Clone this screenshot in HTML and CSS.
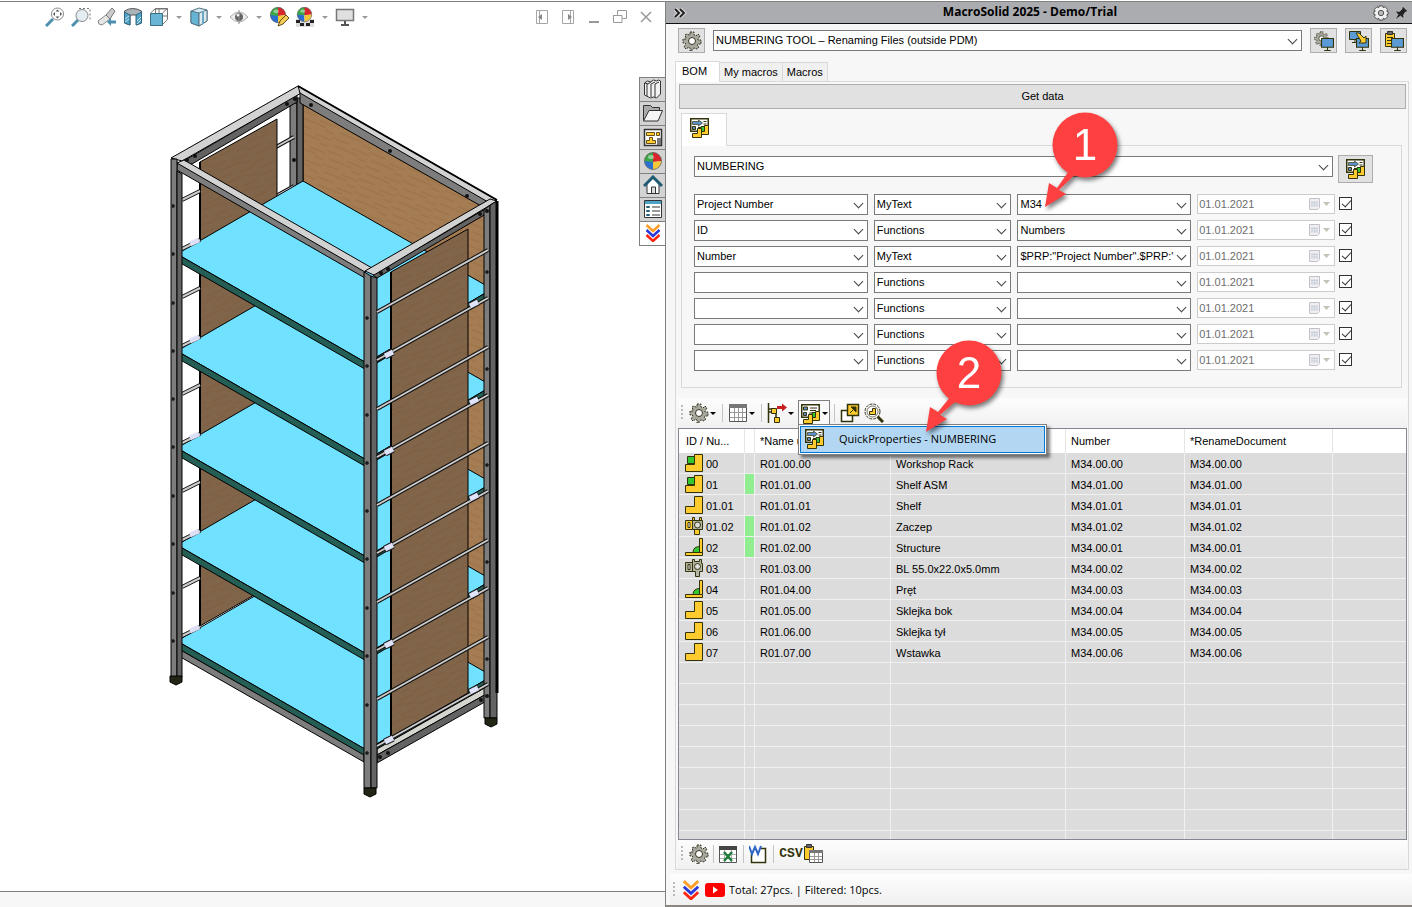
FILE: index.html
```html
<!DOCTYPE html>
<html lang="en">
<head>
    <meta charset="UTF-8">
    <title>MacroSolid 2025 - Demo/Trial</title>
    <link rel="stylesheet" href="styles.css">
</head>
<body>
<svg class="defs" aria-hidden="true">
    <symbol id="i-gear" viewBox="0 0 20 20">
        <path d="M8 1h4v3l2 1 2-2 2 2-2 3v1h3v4h-3l-1 1 2 2-2 2-3-1-2 1v2H8v-3l-1-1-3 2-2-2 2-3-1-1H1V8h3V7L3 4l2-1 2 1 1 0z" fill="#a9a9a2" stroke="#33331c" stroke-dasharray="2 1"/>
        <circle cx="10" cy="10" r="3.500" fill="#fff" stroke="#33331c"/>
    </symbol>
    <symbol id="i-quick" viewBox="0 0 20 20">
        <path d="M.750.750h17.500v7L12 13.250H.750z" fill="#fff" stroke="#33330a" stroke-width="1.500"/>
        <path d="M2.500 3.500h6V2l4 3-4 3V6.500h-6z" fill="#5b8fc9" stroke="#33330a" stroke-width=".7"/>
        <path d="M2.500 8.500h3v3h-3z" fill="#5b8fc9" stroke="#33330a"/>
        <path d="M13.500 3.500h3M13.500 6h3M8 9.500h3" stroke="#33330a"/>
        <path d="M11 8.500h4v5h-4z" fill="#32c832" stroke="#33330a"/>
        <path d="M10.500 16.500v-3h4v-6h4v9z" fill="#ffcb2f" stroke="#33330a"/>
        <path d="M2.500 19.500v-4h5v-5h4v9z" fill="#ffcb2f" stroke="#33330a"/>
    </symbol>
    <symbol id="i-props" viewBox="0 0 20 20">
        <path d="M.750.750h17.500v7L12 13.250H.750z" fill="#fff" stroke="#33330a" stroke-width="1.500"/>
        <path d="M2.500 3h4v3h-4zM2.500 8.500h3v3h-3z" fill="#5b8fc9" stroke="#33330a"/>
        <path d="M9 4h7M9 6.500h6M8 9h3" stroke="#33330a"/>
        <path d="M11 8.500h4v5h-4z" fill="#32c832" stroke="#33330a"/>
        <path d="M10.500 16.500v-3h4v-6h4v9z" fill="#ffcb2f" stroke="#33330a"/>
        <path d="M2.500 19.500v-4h5v-5h4v9z" fill="#ffcb2f" stroke="#33330a"/>
    </symbol>
    <symbol id="i-part" viewBox="0 0 18 18">
        <path d="M.5 17.500v-7h9v-10h8v17z" fill="#ffcb2f" stroke="#33330a"/>
    </symbol>
    <symbol id="i-asm" viewBox="0 0 18 18">
        <path d="M.5 17.500v-7h9v-10h8v17z" fill="#ffcb2f" stroke="#33330a"/>
        <path d="M2.500 2.500h7v7h-7z" fill="#32c832" stroke="#33330a"/>
    </symbol>
    <symbol id="i-weld" viewBox="0 0 18 18">
        <path d="M8 14.500q0-6 7-6v6z" fill="#32c832" stroke="#33330a"/>
        <path d="M.5 14.500h17v3H.5zM14.500 14.500V.5h3v14z" fill="#ffcb2f" stroke="#33330a"/>
    </symbol>
    <symbol id="i-bolt" viewBox="0 0 18 18">
        <path d="M.5 3.500h7v9h-7z" fill="#b5b5a5" stroke="#33330a"/>
        <path d="M7.500.5h2v2h5v-2h2v4h1v8h-3v5h-4v-5h-3z" fill="#b5b5a5" stroke="#33330a"/>
        <path d="M3 5.500h2v5H3z" fill="#eee" stroke="#33330a"/>
        <circle cx="12.500" cy="7.500" r="3" fill="#ddd" stroke="#33330a"/>
    </symbol>
    <symbol id="i-bolt-y" viewBox="0 0 18 18">
        <path d="M.5 3.500h7v9h-7zM9.500 12.500h5v5h-5zM7.500.5h2v3h-2zM14.500.5h2v3h-2z" fill="#ffcb2f" stroke="#33330a"/>
        <path d="M7.500 3.500h10v9h-10z" fill="#b5b5a5" stroke="#33330a"/>
        <path d="M3 5.500h2v5H3z" fill="#fff" stroke="#33330a"/>
        <circle cx="12.500" cy="8" r="3" fill="#ddd" stroke="#33330a"/>
    </symbol>
    <symbol id="i-screen" viewBox="0 0 12 12">
        <path d="M.5.5h11v8H.5zM6 8v3M3 11.500h6" fill="#5b9bd5" stroke="#33330a"/>
    </symbol>
    <symbol id="i-chevrons" viewBox="0 0 16 18">
        <g fill="none" stroke-width="2.500">
            <path d="M1.500 1 8 7l6.500-6" stroke="#ff9f27"/>
            <path d="M1.500 6 8 12l6.500-6" stroke="#2a36d8"/>
            <path d="M1.500 11 8 17l6.500-6" stroke="#ff2410"/>
        </g>
    </symbol>
    <symbol id="i-cal" viewBox="0 0 22 12">
        <path d="M.5.5h10v9l-2 2h-8z" fill="#f1eef2" stroke="#c4c0c8"/>
        <path d="M3 3v6M5.500 3v6M8 3v6M2 4.500h7M2 7h7" stroke="#c9d0dc"/>
        <path d="M14 4h7l-3.500 4z" fill="#c2c4b8"/>
    </symbol>
    <symbol id="i-ball" viewBox="0 0 20 20">
        <clipPath id="ball-clip"><circle cx="10" cy="10" r="8.500"/></clipPath>
        <g clip-path="url(#ball-clip)">
            <path d="M0 0h11v11H0z" fill="#39a845"/>
            <path d="M10 0h10v10l-10 1z" fill="#d9262c"/>
            <path d="M0 10l10 1v9H0z" fill="#2b6fd0"/>
            <path d="M10 11l10-1v10H10z" fill="#f5c838"/>
        </g>
        <ellipse cx="8" cy="6" rx="3" ry="2" fill="#fff" opacity=".45"/>
        <circle cx="10" cy="10" r="8.500" fill="none" stroke="#555" stroke-width=".7"/>
    </symbol>
</svg>

<div class="app">
    <main class="viewer">
        <div class="view-bar">
            <button title="Zoom to Fit"><svg viewBox="0 0 20 20"><path d="M1 19l7-7" stroke="#4d8fae" stroke-width="3"/><circle cx="12.500" cy="7" r="6" fill="#fff" stroke="#8a8a8a"/><path d="M12.500 2.500l2 2h-4zM12.500 11.500l2-2h-4zM8 7l2-2v4zM17 7l-2-2v4z" fill="#555"/></svg></button>
            <button title="Zoom to Area"><svg viewBox="0 0 20 20"><path d="M8 1.500h11v12" fill="none" stroke="#777" stroke-dasharray="2 2"/><path d="M1 19l6-6" stroke="#4d8fae" stroke-width="3"/><circle cx="11" cy="8.500" r="6" fill="#e4edf1" stroke="#8a8a8a"/></svg></button>
            <button title="Previous View"><svg viewBox="0 0 20 20"><path d="M1 14l8-6 4 4-8 6q-4 0-4-4z" fill="#e6e6e6" stroke="#888"/><path d="M9 8l6-7 3 3-5 8z" fill="#ccc" stroke="#777"/><path d="M19 15h-6" stroke="#4d8fae" stroke-width="3"/><path d="M14 11l-4 4 4 4z" fill="#4d8fae"/></svg></button>
            <button title="Section View"><svg viewBox="0 0 20 20"><path d="M1.500 4q8-5 17 0v12l-5 2V8H7v10l-5.500-2z" fill="#a9b3b8" stroke="#555"/><path d="M1.500 5L7 8v10l-5.500-2zM13 8l5.500-3v11L13 18z" fill="#4fa3c7" stroke="#34677f"/><path d="M2 12l4-3M2 15l4-3M14 14l4-4M14 17l4-4" stroke="#fff" stroke-width=".7"/></svg></button>
            <button title="View Orientation"><svg viewBox="0 0 20 20"><path d="M1.500 6l5-4.500h12v11l-5 5M6.500 2v4M13.500 6l5-4.500M6 2h12M10 2v4M14 9h4" fill="#fff" stroke="#777"/><path d="M1.500 6.500h12v12h-12z" fill="#68b5d5" stroke="#3e6d82"/></svg></button>
            <span class="caret"></span>
            <button title="Display Style"><svg viewBox="0 0 20 20"><path d="M2 4l8-3 8 2v11l-8 5-8-3z" fill="#d5e9f1" stroke="#547381"/><path d="M2 4l8 2v13l-8-3z" fill="#65b4d4" stroke="#547381"/><path d="M10 6l8-3v11l-8 5z" fill="#dce9ee" stroke="#547381"/><path d="M14 4v13" stroke="#6ba9c2" stroke-width="2"/></svg></button>
            <span class="caret"></span>
            <button title="Hide/Show Items"><svg viewBox="0 0 20 20"><path d="M1 10q9-10 18 0-9 10-18 0z" fill="#eee" stroke="#aaa"/><circle cx="10" cy="10" r="4" fill="#666"/><path d="M10 3v14" stroke="#888"/><circle cx="9" cy="8" r="1.500" fill="#eee"/></svg></button>
            <span class="caret"></span>
            <button title="Edit Appearance"><svg viewBox="0 0 20 20"><use href="#i-ball" x="0" y="-1" width="18" height="18"/><path d="M9 19l2-5 6-6 3 3-6 6z" fill="#f3cd57" stroke="#624b20"/></svg></button>
            <button title="Apply Scene"><svg viewBox="0 0 20 20"><path d="M1 12h18v8H1z" fill="#ddd"/><path d="M1 13h4v3H1zM5 16h4v3H5zM15 13h4v3h-4zM11 16h4v3h-4z" fill="#222"/><use href="#i-ball" x="1" y="-1" width="17" height="17"/></svg></button>
            <span class="caret"></span>
            <button title="View Settings"><svg viewBox="0 0 20 20"><path d="M1.500 2.500h17v11h-17z" fill="#e0e0e0" stroke="#777" stroke-width="1.500"/><path d="M10 14v4M6 18h8" stroke="#555" stroke-width="2"/></svg></button>
            <span class="caret"></span>
            <div class="window-buttons">
                <button title="Collapse left"><svg viewBox="0 0 14 14"><path d="M1.500.5h11v13h-11zM4.500 1v12" fill="none" stroke="#a5a5a5"/><path d="M7 4v6L3 7z" fill="#888"/></svg></button>
                <button title="Collapse right"><svg viewBox="0 0 14 14"><path d="M1.500.5h11v13h-11zM9.500 1v12" fill="none" stroke="#a5a5a5"/><path d="M7 4v6l4-3z" fill="#888"/></svg></button>
                <button title="Minimize"><svg viewBox="0 0 14 14"><path d="M2 12h10" stroke="#999" stroke-width="2"/></svg></button>
                <button title="Restore"><svg viewBox="0 0 14 14"><path d="M4.500 5V.5h9v8h-4M0 5.500h9v7H.5v-7" fill="none" stroke="#999"/></svg></button>
                <button title="Close"><svg viewBox="0 0 14 14"><path d="M2 2l10 10M12 2L2 12" stroke="#999" stroke-width="1.500"/></svg></button>
            </div>
        </div>

        <div class="scene">
            <svg class="rack" viewBox="158 80 350 725" role="img" aria-label="Workshop Rack">
                <defs>
                    <pattern id="wood" width="40" height="14" patternUnits="userSpaceOnUse" patternTransform="rotate(22)">
                        <path d="M0 0h40v14H0z" fill="#a57d54"/>
                        <path d="M0 3h17M22 6h18M4 10h26M30 13h10" stroke="#93683d" stroke-width=".6"/>
                    </pattern>
                    <pattern id="wood-dark" width="40" height="14" patternUnits="userSpaceOnUse" patternTransform="rotate(-25)">
                        <path d="M0 0h40v14H0z" fill="#81654a"/>
                        <path d="M0 3h17M22 6h18M4 10h26M30 13h10" stroke="#775636" stroke-width=".6"/>
                    </pattern>
                    <g id="shelf">
                        <path d="M177 254l126-73 184 105v6l-117 69v4z" fill="#70e1ff" stroke="#000"/>
                        <path d="M177 254l193 111v7L177 261z" fill="#245e54" stroke="#000"/>
                        <path d="M370 361l117-69v6l-117 69z" fill="#245e54" stroke="#000"/>
                    </g>
                    <g id="rod">
                        <path d="M377 312l111-62" stroke="#111" stroke-width="4"/>
                        <path d="M377 312l111-62" stroke="#ccc" stroke-width="2"/>
                    </g>
                    <g id="rod-clip">
                        <use href="#rod" y="48"/>
                        <path d="M385 356l8-4M470 306l8-4" stroke="#222" stroke-width="7"/>
                        <path d="M385 356l8-4M470 306l8-4" stroke="#e0e4fa" stroke-width="5"/>
                    </g>
                    <g id="rod-left">
                        <path d="M182 200l18-9M182 249l18-9" stroke="#111" stroke-width="4"/>
                        <path d="M182 200l18-9M182 249l18-9" stroke="#ccc" stroke-width="2"/>
                        <path d="M190 244l9-4" stroke="#dde0f4" stroke-width="5"/>
                    </g>
                    <g id="bolts" fill="#111" stroke="#333">
                        <circle cx="173" cy="206" r="1.500"/><circle cx="173" cy="254" r="1.500"/>
                        <circle cx="367" cy="318" r="1.500"/><circle cx="367" cy="366" r="1.500"/>
                        <circle cx="487" cy="272" r="1.500"/>
                    </g>
                    <g id="foot">
                        <path d="M-6-1h12v6L0 8l-6-3z" fill="#222615" stroke="#000"/>
                    </g>
                </defs>
                <path d="M303 102l184 105v484l-184-105z" fill="url(#wood)" stroke="#000"/>
                <path d="M290 103h7v90h-7z" fill="#7d7d7d" stroke="#000"/>
                <path d="M297 98h6v90h-6z" fill="#636363" stroke="#000"/>
                <path d="M276 147l18-10M276 196l18-10" stroke="#111" stroke-width="4"/>
                <path d="M276 147l18-10M276 196l18-10" stroke="#ccc" stroke-width="2"/>
                <path d="M200 162l77-43v463l-77 44z" fill="url(#wood-dark)" stroke="#000"/>
                <path d="M200 162v464" stroke="#000" stroke-width="2"/>
                <use href="#shelf" y="387"/>
                <use href="#shelf" y="291"/>
                <use href="#shelf" y="194"/>
                <use href="#shelf" y="97"/>
                <use href="#shelf"/>
                <use href="#rod-left"/>
                <use href="#rod-left" y="97"/>
                <use href="#rod-left" y="194"/>
                <use href="#rod-left" y="291"/>
                <use href="#rod-left" y="387"/>
                <!-- bottom frame -->
                <path d="M177 648l187 107v7L177 655z" fill="#7d7d7d" stroke="#000"/>
                <path d="M377 749l111-63 2 6-113 63z" fill="#d5d5d0" stroke="#000"/>
                <path d="M377 755l113-63v7l-113 64z" fill="#636363" stroke="#000"/>
                <!-- right side panel -->
                <path d="M391 272l77-43v464l-77 44z" fill="url(#wood-dark)" stroke="#000"/>
                <path d="M391 272v465" stroke="#000" stroke-width="2"/>
                <!-- top frame -->
                <path d="M182 162l115-67v7l-105 62z" fill="#636363" stroke="#000"/>
                <path d="M171 158l127-72 5 6-121 69z" fill="#d2d2d2" stroke="#000"/>
                <path d="M300 92l187 108-6 6-181-103z" fill="#7d7d7d" stroke="#000"/>
                <path d="M298 86l199 114-9 2-188-109z" fill="#d2d2d2" stroke="#000"/>
                <path d="M298 86l199 114" stroke="#000" stroke-width="2"/>
                <path d="M177 162l188 109v7L177 170z" fill="#7d7d7d" stroke="#000"/>
                <path d="M177 163l7-3 188 108-7 4z" fill="#d2d2d2" stroke="#000"/>
                <path d="M373 275l124-73-6 9-114 67z" fill="#636363" stroke="#000"/>
                <path d="M365 271l125-72 7 2-123 74z" fill="#d2d2d2" stroke="#000"/>
                <!-- posts -->
                <path d="M171 159h6v518h-6z" fill="#7d7d7d" stroke="#000"/>
                <path d="M177 171l5 3v503h-5z" fill="#636363" stroke="#000"/>
                <path d="M484 210l6-5v513h-6z" fill="#7d7d7d" stroke="#000"/>
                <path d="M490 205l7-4v517h-7z" fill="#636363" stroke="#000"/>
                <path d="M497 201v492" stroke="#000" stroke-width="3"/>
                <path d="M364 272l7 4v512h-7z" fill="#7d7d7d" stroke="#000"/>
                <path d="M371 276l6 2v510h-6z" fill="#636363" stroke="#000"/>
                <use href="#rod"/>
                <use href="#rod" y="97"/>
                <use href="#rod" y="193"/>
                <use href="#rod" y="290"/>
                <use href="#rod" y="387"/>
                <use href="#rod-clip"/>
                <use href="#rod-clip" y="97"/>
                <use href="#rod-clip" y="193"/>
                <use href="#rod-clip" y="290"/>
                <use href="#rod-clip" y="386"/>
                <use href="#bolts"/>
                <use href="#bolts" y="97"/>
                <use href="#bolts" y="193"/>
                <use href="#bolts" y="290"/>
                <use href="#bolts" y="387"/>
                <g fill="#111">
                    <circle cx="187" cy="160" r="2"/><circle cx="195" cy="156" r="2"/>
                    <circle cx="287" cy="104" r="2"/><circle cx="295" cy="99" r="2"/>
                    <circle cx="311" cy="105" r="2"/><circle cx="390" cy="151" r="2"/><circle cx="467" cy="196" r="2"/>
                    <circle cx="294" cy="160" r="2"/>
                    <circle cx="480" cy="214" r="2"/><circle cx="487" cy="211" r="2"/>
                    <circle cx="381" cy="273" r="2"/><circle cx="388" cy="269" r="2"/>
                    <circle cx="380" cy="757" r="2"/><circle cx="388" cy="753" r="2"/>
                    <circle cx="481" cy="700" r="2"/><circle cx="487" cy="696" r="2"/>
                </g>
                <use href="#foot" x="176" y="677"/>
                <use href="#foot" x="370" y="789"/>
                <use href="#foot" x="491" y="719"/>
            </svg>
        </div>

        <nav class="side-tabs">
            <button title="Design Library"><svg viewBox="0 0 20 20"><path d="M1.500 4l3-2 3 1 3-2 3 1 2-1 2 1v13l-4 4-3-1-3 1-6-3zM4 5v12M8 5v13M12 5v13M2 4l3 1 3-2M8 5l4-2M12 5l4-2" fill="#f2f2f2" stroke="#333"/></svg></button>
            <button title="File Explorer"><svg viewBox="0 0 20 20"><path d="M.5 18V2.500h7l2 2h7V8" fill="#aaa" stroke="#333"/><path d="M.5 18L6 7.500h13.500L15 18z" fill="#f5f5f5" stroke="#333"/></svg></button>
            <button title="View Palette"><svg viewBox="0 0 20 20"><path d="M1.500 2.500h17v16h-17z" fill="#fff" stroke="#333" stroke-width="1.500"/><path d="M3.500 5.500h8v3h-8zM13.500 5.500h3v3h-3zM6.500 10.500h3v3h3v3h-9v-3h3z" fill="#ffcb2f" stroke="#665018"/><path d="M14 11h4v7h-4z" fill="#777"/></svg></button>
            <button title="Appearances"><svg><use href="#i-ball"/></svg></button>
            <button title="Home"><svg viewBox="0 0 20 20"><path d="M4 9v9.500h12V9l-6-6z" fill="#fff" stroke="#333"/><path d="M1 11l9-9 9 9" fill="none" stroke="#215a73" stroke-width="3"/><path d="M8.500 18v-6h4v6" fill="#ddd" stroke="#333"/></svg></button>
            <button title="Custom Properties"><svg viewBox="0 0 20 20"><path d="M1.500 1.500h17v17h-17z" fill="#fff" stroke="#333"/><path d="M2 2h16v3H2z" fill="#4ca3c5"/><path d="M3.500 7.500h3v1h-3zM3.500 11.500h3v1h-3zM3.500 15.500h3v1h-3z" stroke="#24627c"/><path d="M9 8h8M9 12h8M9 16h8" stroke="#333"/></svg></button>
            <button class="current" title="MacroSolid"><svg><use href="#i-chevrons"/></svg></button>
        </nav>
        <div class="viewer-status"></div>
    </main>

    <aside class="pane">
        <header class="pane-title">
            <button title="Collapse"><svg viewBox="0 0 14 14"><path d="M2 3l4 4-4 4M7 3l4 4-4 4" fill="none" stroke="#ddd" stroke-width="4"/><path d="M2 3l4 4-4 4M7 3l4 4-4 4" fill="none" stroke="#222" stroke-width="2"/></svg></button>
            <h1>MacroSolid 2025 - Demo/Trial</h1>
            <button class="wide" title="Options"><svg viewBox="0 0 18 18"><path d="M7 1h4l.5 2 2-1 3 3-1 2 1.500.5v3l-1.500.5 1 2-3 3-2-1-.5 2H7l-.5-2-2 1-3-3 1-2L1 10.500v-3L2.500 7l-1-2 3-3 2 1z" fill="#eee" stroke="#444"/><circle cx="9" cy="9" r="3" fill="#bbb" stroke="#444"/></svg></button>
            <button title="Pin"><svg viewBox="0 0 14 14"><path d="M8.500 0L14 5.500l-2.500.5-2 3 .5 4-3.500-3L1 14l3-5.500L1 5l4.500.5L8 3z" fill="#222" stroke="#ddd" stroke-width=".5"/></svg></button>
        </header>

        <div class="macro-row">
            <button class="tool" title="Settings"><svg><use href="#i-gear"/></svg></button>
            <span class="pick"><select aria-label="Macro"><option>NUMBERING TOOL – Renaming Files (outside PDM)</option></select></span>
            <button class="tool" title="Configure"><svg viewBox="0 0 20 20"><use href="#i-gear" width="15" height="15"/><use href="#i-screen" x="7" y="7" width="13" height="13"/></svg></button>
            <button class="tool" title="Transfer"><svg viewBox="0 0 20 20"><use href="#i-screen" x="0" y="0" width="12" height="12"/><use href="#i-screen" x="7" y="7" width="13" height="13"/><path d="M7 2h3l5 5 2-2v7h-7l2-2z" fill="#ffcb2f" stroke="#33330a"/></svg></button>
            <button class="tool" title="Paste"><svg viewBox="0 0 20 20"><path d="M1.500 2.500h9v13h-9z" fill="#ffcb2f" stroke="#33330a"/><path d="M3.500.5h5v3h-5z" fill="#666" stroke="#333"/><path d="M3 6.500h6M3 9.500h4M3 12.500h4" stroke="#33330a"/><use href="#i-screen" x="7" y="7" width="13" height="13"/></svg></button>
        </div>

        <div class="tabs">
            <button class="current">BOM</button>
            <button>My macros</button>
            <button>Macros</button>
        </div>

        <section class="tab-page">
            <button class="get-data">Get data</button>

            <div class="sub-tabs"><button title="QuickProperties"><svg><use href="#i-quick"/></svg></button></div>
            <div class="sub-page">
                <div class="profile-row">
                    <span class="pick"><select aria-label="Profile"><option>NUMBERING</option></select></span>
                    <button class="tool large" title="Run"><svg><use href="#i-quick"/></svg></button>
                </div>
                <div class="props">
                    <span class="pick"><select aria-label="Property 1"><option>Project Number</option></select></span>
                    <span class="pick"><select aria-label="Type 1"><option>MyText</option></select></span>
                    <span class="pick"><select aria-label="Value 1"><option>M34</option></select>
                        <svg class="callout callout-1" viewBox="0 0 90 110">
                            <path d="M36 53L15 83l-8-5L3 102l21-13-7-4 28-27z" fill="#ff4040"/>
                            <circle cx="43" cy="40" r="32.500" fill="#ff4040"/>
                            <text x="43" y="55">1</text>
                        </svg>
                    </span>
                    <span class="date"><input aria-label="Date 1" value="01.01.2021" disabled><svg><use href="#i-cal"/></svg></span>
                    <input type="checkbox" aria-label="Use 1" checked>

                    <span class="pick"><select aria-label="Property 2"><option>ID</option></select></span>
                    <span class="pick"><select aria-label="Type 2"><option>Functions</option></select></span>
                    <span class="pick"><select aria-label="Value 2"><option>Numbers</option></select></span>
                    <span class="date"><input aria-label="Date 2" value="01.01.2021" disabled><svg><use href="#i-cal"/></svg></span>
                    <input type="checkbox" aria-label="Use 2" checked>

                    <span class="pick"><select aria-label="Property 3"><option>Number</option></select></span>
                    <span class="pick"><select aria-label="Type 3"><option>MyText</option></select></span>
                    <span class="pick"><select aria-label="Value 3"><option>$PRP:"Project Number".$PRP:'</option></select></span>
                    <span class="date"><input aria-label="Date 3" value="01.01.2021" disabled><svg><use href="#i-cal"/></svg></span>
                    <input type="checkbox" aria-label="Use 3" checked>

                    <span class="pick"><select aria-label="Property 4"><option></option></select></span>
                    <span class="pick"><select aria-label="Type 4"><option>Functions</option></select></span>
                    <span class="pick"><select aria-label="Value 4"><option></option></select></span>
                    <span class="date"><input aria-label="Date 4" value="01.01.2021" disabled><svg><use href="#i-cal"/></svg></span>
                    <input type="checkbox" aria-label="Use 4" checked>

                    <span class="pick"><select aria-label="Property 5"><option></option></select></span>
                    <span class="pick"><select aria-label="Type 5"><option>Functions</option></select></span>
                    <span class="pick"><select aria-label="Value 5"><option></option></select></span>
                    <span class="date"><input aria-label="Date 5" value="01.01.2021" disabled><svg><use href="#i-cal"/></svg></span>
                    <input type="checkbox" aria-label="Use 5" checked>

                    <span class="pick"><select aria-label="Property 6"><option></option></select></span>
                    <span class="pick"><select aria-label="Type 6"><option>Functions</option></select></span>
                    <span class="pick"><select aria-label="Value 6"><option></option></select></span>
                    <span class="date"><input aria-label="Date 6" value="01.01.2021" disabled><svg><use href="#i-cal"/></svg></span>
                    <input type="checkbox" aria-label="Use 6" checked>

                    <span class="pick"><select aria-label="Property 7"><option></option></select></span>
                    <span class="pick"><select aria-label="Type 7"><option>Functions</option></select></span>
                    <span class="pick"><select aria-label="Value 7"><option></option></select></span>
                    <span class="date"><input aria-label="Date 7" value="01.01.2021" disabled><svg><use href="#i-cal"/></svg></span>
                    <input type="checkbox" aria-label="Use 7" checked>
                </div>
            </div>

            <div class="strip bom-strip">
                <span class="grip"></span>
                <button class="drop" title="Options"><svg><use href="#i-gear"/></svg></button>
                <span class="sep"></span>
                <button class="drop" title="Columns"><svg viewBox="0 0 20 20"><path d="M1.500 1.500h17v17h-17z" fill="#fff" stroke="#555"/><path d="M1 1h18v4H1z" fill="#777"/><path d="M2 9.500h16M2 14.500h16M6.500 5v13M10.500 5v13M14.500 5v13" stroke="#999"/></svg></button>
                <span class="sep"></span>
                <button class="drop" title="Structure"><svg viewBox="0 0 20 20"><path d="M1.500 0v20M1 6h4M1 9h4M9 10v5" stroke="#33330a" stroke-width="1.500"/><path d="M4.500 5.500h5v5h-5zM7.500 14.500h5v5h-5z" fill="#ffcb2f" stroke="#33330a"/><path d="M10 3h5V.500L20 4.500l-5 4V6h-5z" fill="#c42020"/></svg></button>
                <div class="menu-host">
                    <button class="drop open" title="QuickProperties"><svg><use href="#i-props"/></svg></button>
                    <div class="menu"><button><svg><use href="#i-quick"/></svg>QuickProperties - NUMBERING</button></div>
                    <svg class="callout callout-2" viewBox="0 0 90 110">
                        <path d="M36 53L15 79l-8-5L3 99l21-13-7-4 28-24z" fill="#ff4040"/>
                        <circle cx="46" cy="40" r="32.500" fill="#ff4040"/>
                        <text x="46" y="55">2</text>
                    </svg>
                </div>
                <span class="sep"></span>
                <button class="spaced" title="Open"><svg viewBox="0 0 20 20"><path d="M1.500 7.500h11v11h-11z" fill="#fff" stroke="#33330a" stroke-width="1.500"/><path d="M7.500 1.500h11v11h-11z" fill="#ffcb2f" stroke="#33330a" stroke-width="1.500"/><path d="M10 10l5-5M11 4h5v5z" fill="#33330a" stroke="#33330a"/></svg></button>
                <button title="Find"><svg viewBox="0 0 20 20"><path d="M13 13l6 6" stroke="#33330a" stroke-width="3"/><circle cx="8.500" cy="8.500" r="7.500" fill="#fff" stroke="#33331c" stroke-dasharray="3 1"/><circle cx="8.500" cy="8.500" r="5.500" fill="#fff" stroke="#33331c" stroke-width=".7"/><path d="M5.500 11.500v-3h3v-3h3v6z" fill="#ffcb2f" stroke="#33330a"/></svg></button>
            </div>

            <div class="list">
                <table>
                    <colgroup><col class="c-id"><col class="c-mark"><col class="c-name"><col class="c-desc"><col class="c-num"><col class="c-ren"><col></colgroup>
                    <thead>
                        <tr><th>ID / Nu...</th><th></th><th>*Name u</th><th></th><th>Number</th><th>*RenameDocument</th><th></th></tr>
                    </thead>
                    <tbody>
                        <tr><td><svg><use href="#i-asm"/></svg>00</td><td></td><td>R01.00.00</td><td>Workshop Rack</td><td>M34.00.00</td><td>M34.00.00</td><td></td></tr>
                        <tr><td><svg><use href="#i-asm"/></svg>01</td><td class="mark"></td><td>R01.01.00</td><td>Shelf ASM</td><td>M34.01.00</td><td>M34.01.00</td><td></td></tr>
                        <tr><td><svg><use href="#i-part"/></svg>01.01</td><td></td><td>R01.01.01</td><td>Shelf</td><td>M34.01.01</td><td>M34.01.01</td><td></td></tr>
                        <tr><td><svg><use href="#i-bolt-y"/></svg>01.02</td><td class="mark"></td><td>R01.01.02</td><td>Zaczep</td><td>M34.01.02</td><td>M34.01.02</td><td></td></tr>
                        <tr><td><svg><use href="#i-weld"/></svg>02</td><td class="mark"></td><td>R01.02.00</td><td>Structure</td><td>M34.00.01</td><td>M34.00.01</td><td></td></tr>
                        <tr><td><svg><use href="#i-bolt"/></svg>03</td><td></td><td>R01.03.00</td><td>BL 55.0x22.0x5.0mm</td><td>M34.00.02</td><td>M34.00.02</td><td></td></tr>
                        <tr><td><svg><use href="#i-weld"/></svg>04</td><td></td><td>R01.04.00</td><td>Pręt</td><td>M34.00.03</td><td>M34.00.03</td><td></td></tr>
                        <tr><td><svg><use href="#i-part"/></svg>05</td><td></td><td>R01.05.00</td><td>Sklejka bok</td><td>M34.00.04</td><td>M34.00.04</td><td></td></tr>
                        <tr><td><svg><use href="#i-part"/></svg>06</td><td></td><td>R01.06.00</td><td>Sklejka tył</td><td>M34.00.05</td><td>M34.00.05</td><td></td></tr>
                        <tr><td><svg><use href="#i-part"/></svg>07</td><td></td><td>R01.07.00</td><td>Wstawka</td><td>M34.00.06</td><td>M34.00.06</td><td></td></tr>
                        <tr><td></td><td></td><td></td><td></td><td></td><td></td><td></td></tr>
                        <tr><td></td><td></td><td></td><td></td><td></td><td></td><td></td></tr>
                        <tr><td></td><td></td><td></td><td></td><td></td><td></td><td></td></tr>
                        <tr><td></td><td></td><td></td><td></td><td></td><td></td><td></td></tr>
                        <tr><td></td><td></td><td></td><td></td><td></td><td></td><td></td></tr>
                        <tr><td></td><td></td><td></td><td></td><td></td><td></td><td></td></tr>
                        <tr><td></td><td></td><td></td><td></td><td></td><td></td><td></td></tr>
                        <tr><td></td><td></td><td></td><td></td><td></td><td></td><td></td></tr>
                        <tr><td></td><td></td><td></td><td></td><td></td><td></td><td></td></tr>
                    </tbody>
                </table>
            </div>

            <div class="strip export-strip">
                <span class="grip"></span>
                <button title="Options"><svg><use href="#i-gear"/></svg></button>
                <span class="sep"></span>
                <button title="Excel"><svg viewBox="0 0 20 20"><path d="M.5 2.500h17v16H.5z" fill="#fff" stroke="#555"/><path d="M0 2h18v4H0z" fill="#444"/><path d="M1 10.500h16M1 14.500h16M5.500 6v12M12.500 6v12" stroke="#aaa"/><path d="M5 8l8 9M13 8l-8 9" stroke="#1d7a3c" stroke-width="2.500"/></svg></button>
                <span class="sep"></span>
                <button title="Word"><svg viewBox="0 0 20 20"><path d="M2.500 10v8.500h14v-14H12" fill="#fff" stroke="#33330a" stroke-width="1.500"/><path d="M0 2l3 8L6 3l3 7 3-8" fill="none" stroke="#2f66c4" stroke-width="2"/></svg></button>
                <span class="sep"></span>
                <button class="csv">CSV</button>
                <button title="Copy table"><svg viewBox="0 0 20 20"><path d="M1.500 2.500h9v13h-9z" fill="#ffcb2f" stroke="#33330a"/><path d="M3.500.5h5v3h-5z" fill="#666" stroke="#333"/><path d="M6.500 6.500h13v12h-13z" fill="#fff" stroke="#555"/><path d="M6 6h14v3H6z" fill="#777"/><path d="M7 12.500h12M7 15.500h12M11.500 9v9M15.500 9v9" stroke="#999"/></svg></button>
            </div>
        </section>

        <footer class="strip status">
            <span class="grip"></span>
            <button title="MacroSolid"><svg><use href="#i-chevrons"/></svg></button>
            <button title="YouTube"><svg viewBox="0 0 20 20"><rect y="3" width="20" height="14" rx="3" fill="#f00"/><path d="M8 6.500v7l5-3.500z" fill="#fff"/></svg></button>
            <span>Total: 27pcs. | Filtered: 10pcs.</span>
        </footer>
    </aside>
</div>
</body>
</html>
```
FILE: styles.css
```css
* {
    box-sizing: border-box;
}
body {
    margin: 0;
    font: 11px/14px "Liberation Sans", Arial, sans-serif;
    color: #000;
    background: #fff;
}
button, select, input {
    font: inherit;
    color: inherit;
    margin: 0;
}
button {
    padding: 0;
    border: 0;
    background: none;
}
svg {
    display: block;
    fill: none;
}
.defs {
    position: absolute;
    width: 0;
    height: 0;
}
.app {
    display: grid;
    grid-template-columns: 666fr 746fr;
    height: 100vh;
    padding-top: 1px;
}

/* model view */
.viewer {
    position: relative;
    display: flex;
    flex-direction: column;
    min-height: 0;
    border-top: 1px solid #808080;
    border-right: 1px solid #808080;
}
.view-bar {
    display: flex;
    align-items: center;
    gap: 6px;
    height: 30px;
    padding: 0 12px 0 45px;
}
.view-bar svg {
    width: 20px;
    height: 20px;
}
.caret {
    width: 6px;
    height: 3px;
    margin: 0 1px;
    border: 3px solid transparent;
    border-top: 3px solid #999;
    border-bottom: 0;
}
.window-buttons {
    display: flex;
    gap: 12px;
    margin-left: auto;
}
.window-buttons svg {
    width: 14px;
    height: 14px;
}
.scene {
    flex: 1;
    display: flex;
    justify-content: center;
    padding-top: 48px;
    min-height: 0;
}
.rack {
    width: 350px;
    height: 725px;
}
.side-tabs {
    position: absolute;
    right: 0;
    top: 75px;
    width: 26px;
    border: 1px solid #808080;
    border-right: 0;
}
.side-tabs button {
    display: flex;
    align-items: center;
    justify-content: center;
    width: 100%;
    height: 24px;
    padding-bottom: 2px;
    background: #d3d3d3;
    border-bottom: 1px solid #808080;
}
.side-tabs button.current {
    height: 23px;
    background: #fff;
    border: 0;
}
.side-tabs svg {
    width: 20px;
    height: 20px;
}
.side-tabs .current svg {
    height: 18px;
}
.viewer-status {
    height: 16px;
    background: #f7f7f7;
    border-top: 1px solid #808080;
}

/* task pane */
.pane {
    display: flex;
    flex-direction: column;
    min-width: 0;
    min-height: 0;
    background: #f7f7f7;
    border-top: 1px solid #808080;
    border-bottom: 2px solid #8a8682;
}
.pane-title {
    display: flex;
    align-items: center;
    gap: 5px;
    height: 22px;
    padding: 0 4px 0 7px;
    background: #abacb0;
    border-bottom: 1px solid #111;
}
.pane-title h1 {
    flex: 1;
    margin: 0;
    padding-bottom: 2px;
    text-align: center;
    font: bold 12px/16px "Open Sans", sans-serif;
}
.pane-title svg {
    width: 14px;
    height: 14px;
}
.pane-title .wide svg {
    width: 16px;
    height: 16px;
}
.macro-row {
    display: flex;
    align-items: center;
    gap: 8px;
    padding: 4px 5px 0 12px;
}
.macro-row .pick {
    flex: 1;
}
.tool {
    display: flex;
    align-items: center;
    justify-content: center;
    width: 27px;
    height: 25px;
    background: #e1e1e1;
    border: 1px solid #adadad;
}
.tool.large {
    width: 35px;
    height: 28px;
}
.tool svg {
    width: 20px;
    height: 20px;
}
.pick {
    position: relative;
    display: block;
    min-width: 0;
}
.pick::after {
    content: "";
    position: absolute;
    right: 6px;
    top: 6px;
    width: 6px;
    height: 6px;
    border: solid #444;
    border-width: 0 1px 1px 0;
    transform: rotate(45deg);
    pointer-events: none;
}
select {
    appearance: none;
    display: block;
    width: 100%;
    height: 21px;
    padding: 0 16px 2px 2px;
    border: 1px solid #7a7a7a;
    border-radius: 0;
    background: #fff;
}
.tabs {
    display: flex;
    align-items: flex-end;
    margin: 8px 0 0 9px;
}
.tabs button {
    height: 19px;
    padding: 0 4px;
    background: #f0f0f0;
    border: 1px solid #d9d9d9;
    border-left: 0;
    border-bottom: 0;
}
.tabs .current {
    position: relative;
    width: 45px;
    height: 21px;
    padding: 0 6px 2px;
    text-align: left;
    background: #fff;
    border-left: 1px solid #d9d9d9;
    margin-bottom: -1px;
}
.tab-page {
    flex: 1;
    display: flex;
    flex-direction: column;
    min-height: 0;
    margin: 0 3px 0 9px;
    padding: 2px 1px 0 2px;
    border: 1px solid #d9d9d9;
}
.get-data {
    height: 25px;
    flex: none;
    margin: 0 1px;
    padding-bottom: 2px;
    background: #e1e1e1;
    border: 1px solid #adadad;
}
.sub-tabs {
    margin: 4px 0 0 3px;
}
.sub-tabs button {
    position: relative;
    display: block;
    width: 46px;
    height: 33px;
    padding: 0 0 4px 8px;
    margin-bottom: -1px;
    background: #fff;
    border: 1px solid #d9d9d9;
    border-bottom: 0;
}
.sub-tabs svg {
    width: 20px;
    height: 20px;
}
.sub-page {
    margin: 0 5px 0 3px;
    padding: 9px 47px 16px 12px;
    border: 1px solid #d9d9d9;
}
.profile-row {
    display: flex;
    gap: 5px;
    margin-right: -19px;
}
.profile-row .pick {
    flex: 1;
    padding-top: 1px;
}
.profile-row .pick::after {
    top: 7px;
}
.props {
    display: grid;
    grid-template-columns: 174fr 138fr 174fr 138fr 13px;
    align-items: start;
    gap: 5px 6px;
    margin-top: 11px;
}
.date {
    position: relative;
    min-width: 0;
}
.date input {
    display: block;
    width: 100%;
    height: 20px;
    padding: 0 24px 0 1px;
    color: #6d6d6d;
    background: #fff;
    border: 1px solid #ccc;
}
.date svg {
    position: absolute;
    right: 4px;
    top: 4px;
    width: 22px;
    height: 12px;
}
input[type="checkbox"] {
    appearance: none;
    position: relative;
    width: 13px;
    height: 13px;
    margin: 3px 0 0 -2px;
    background: #fff;
    border: 1px solid #333;
}
input[type="checkbox"]:checked::after {
    content: "";
    position: absolute;
    left: 4px;
    top: 0;
    width: 4px;
    height: 8px;
    border: solid #333;
    border-width: 0 1px 1px 0;
    transform: rotate(42deg);
}

/* tool strips */
.strip {
    display: flex;
    align-items: center;
    height: 30px;
    flex: none;
    background: linear-gradient(#fdfdfd, #f0f0f0);
}
.strip svg {
    width: 20px;
    height: 20px;
}
.grip {
    width: 2px;
    height: 16px;
    margin: 0 6px 0 3px;
    background: repeating-linear-gradient(#bbb 0 2px, transparent 2px 4px);
}
.sep {
    width: 1px;
    height: 18px;
    margin: 0 5px 0 6px;
    background: #c4c4c4;
}
.bom-strip {
    margin-top: 10px;
}
.drop {
    display: flex;
    align-items: center;
    gap: 1px;
}
.drop::after {
    content: "";
    border: 3px solid transparent;
    border-top-color: #000;
    border-bottom: 0;
}
.menu-host {
    position: relative;
    z-index: 2;
    margin-left: 4px;
}
.menu-host + .sep {
    margin-left: 4px;
}
.spaced {
    margin-right: 4px;
}
.drop.open {
    width: 32px;
    height: 26px;
    padding-left: 2px;
    background: #fafafa;
    border: 1px solid #808080;
    border-bottom: 0;
}
.menu {
    position: absolute;
    left: 0;
    top: 24px;
    width: 249px;
    padding: 1px;
    background: #fff;
    border: 1px solid #808080;
    box-shadow: 3px 3px 3px rgba(0, 0, 0, .5);
}
.menu button {
    display: flex;
    align-items: center;
    gap: 14px;
    width: 100%;
    height: 27px;
    padding: 0 0 2px 4px;
    background: #b3d7f3;
    border: 1px solid #0078d7;
    font: 11px/16px "Open Sans", sans-serif;
}
.callout {
    position: absolute;
    z-index: 3;
    pointer-events: none;
    filter: drop-shadow(2px 3px 2px rgba(0, 0, 0, .5));
}
.strip .callout, .pick .callout {
    width: 90px;
    height: 110px;
}
.callout text {
    fill: #fff;
    text-anchor: middle;
    font: 44px "Liberation Sans", Arial, sans-serif;
}
.callout-1 {
    left: 25px;
    top: -89px;
}
.callout-2 {
    left: 125px;
    top: -67px;
}

/* bill of materials */
.list {
    flex: 1 1 0;
    min-height: 0;
    overflow: hidden;
    background: #dcdcdc;
    border: 1px solid #828790;
}
table {
    width: 100%;
    table-layout: fixed;
    border-collapse: separate;
    border-spacing: 0;
}
th, td {
    height: 21px;
    padding: 0 5px;
    text-align: left;
    font-weight: normal;
    white-space: nowrap;
    overflow: hidden;
    border-right: 1px solid #f0f0f0;
    border-bottom: 1px solid #f0f0f0;
}
th {
    height: 24px;
    background: #fff;
    border-right-color: #e5e5e5;
    border-bottom: 0;
}
th:first-child {
    padding-left: 7px;
}
td {
    padding-top: 1px;
}
td:first-child {
    padding: 1px 0 0 6px;
}
td svg {
    float: left;
    width: 18px;
    height: 18px;
    margin: -3px 3px -3px 0;
}
th:last-child, td:last-child {
    border-right: 0;
}
.mark {
    background: #90ee90;
}
.c-id { width: 66px; }
.c-mark { width: 10px; }
.c-name { width: 136px; }
.c-desc { width: 175px; }
.c-num { width: 119px; }
.c-ren { width: 148px; }

.export-strip {
    height: 29px;
    padding-bottom: 2px;
}
.export-strip .sep {
    margin: 0 5px 0 4px;
}
.csv {
    width: 24px;
    font: bold 13px/16px "Liberation Mono", monospace;
    color: #33330a;
}
.status {
    height: 31px;
    margin: 4px 0 0 4px;
    font: 11px/16px "Open Sans", sans-serif;
}
.status button {
    margin-right: 4px;
}
```
